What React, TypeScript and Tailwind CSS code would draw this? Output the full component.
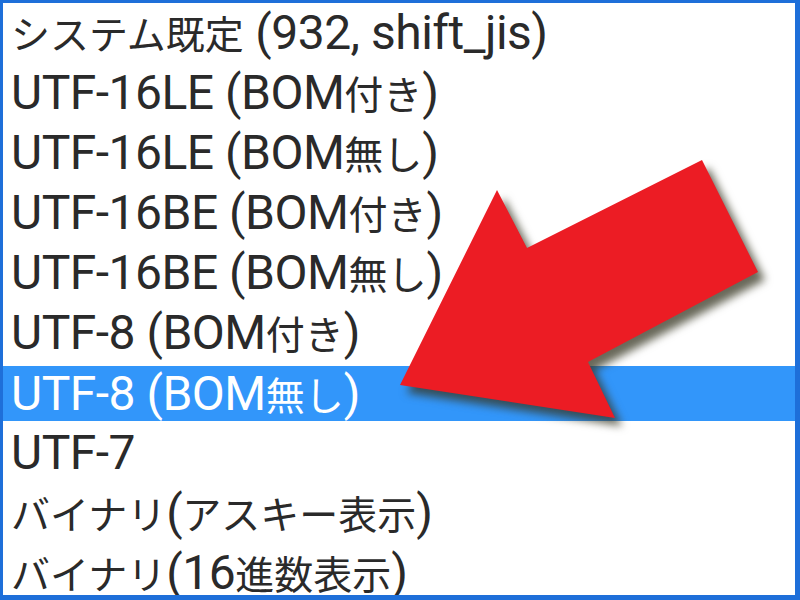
import React from 'react';

const items = [
  'システム既定 (932, shift_jis)',
  'UTF-16LE (BOM付き)',
  'UTF-16LE (BOM無し)',
  'UTF-16BE (BOM付き)',
  'UTF-16BE (BOM無し)',
  'UTF-8 (BOM付き)',
  'UTF-8 (BOM無し)',
  'UTF-7',
  'バイナリ(アスキー表示)',
  'バイナリ(16進数表示)',
];

const selected = 6;

// 和文と欧文でサイズを変える（メイリオ風に欧文を大きめに）
const Label = ({ text }: { text: string }) => {
  const parts = text.split(/([\u3040-\u30ff\u4e00-\u9fff]+)/).filter(Boolean);
  return (
    <span className="whitespace-nowrap leading-none">
      {parts.map((p, i) =>
        /[\u3040-\u30ff\u4e00-\u9fff]/.test(p) ? (
          <span key={i} className="text-[39px]" style={{ fontFamily: '"Noto Sans CJK JP", sans-serif' }}>
            {p}
          </span>
        ) : (
          <span
            key={i}
            className="text-[48px] tracking-[-0.5px]"
            style={{ fontFamily: 'Roboto, "Noto Sans CJK JP", sans-serif' }}
          >
            {p}
          </span>
        )
      )}
    </span>
  );
};

// 赤い矢印（ドロップシャドウ付き）
const Arrow = () => (
  <svg
    className="absolute inset-0 pointer-events-none drop-shadow-[7px_8px_4px_rgba(55,55,35,0.75)]"
    width="800"
    height="600"
    viewBox="0 0 800 600"
  >
    <polygon
      points="400,385 497,190 527,248 702,160 758,272 588,362 615,418"
      fill="#ec1c24"
    />
  </svg>
);

export default function App() {
  return (
    <div className="relative w-[800px] h-[600px] overflow-hidden bg-white">
      <div className="h-full border-[3px] border-r-[5px] border-b-[5px] border-[#1e6fd9] overflow-hidden">
        <ul className="flex flex-col">
          {items.map((item, i) => (
            <li key={i} className="h-[60px] shrink-0 flex flex-col justify-center">
              <div
                className={
                  i === selected
                    ? 'h-[55px] mt-[1px] flex items-center pl-2 bg-[#3296fa] text-white'
                    : 'h-[55px] flex items-center pl-2 text-[#2a2a2a]'
                }
              >
                <Label text={item} />
              </div>
            </li>
          ))}
        </ul>
      </div>
      <Arrow />
    </div>
  );
}
